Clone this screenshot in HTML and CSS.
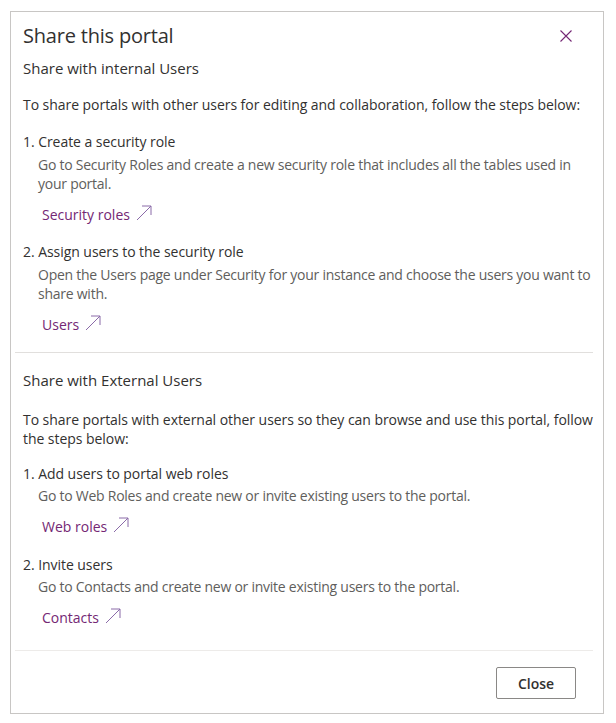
FILE: index.html
```html
<!DOCTYPE html>
<html>
<head>
<meta charset="utf-8">
<link rel="stylesheet" href="styles.css">
</head>
<body>
<div class="dialog">
  <div class="header">
    <h1 class="title">Share this portal</h1>
    <button class="x" aria-label="Close">
      <svg width="12" height="12" viewBox="0 0 12 12"><path d="M0.5 0.5 L11.5 11.5 M11.5 0.5 L0.5 11.5" stroke="#742774" stroke-width="1.1" fill="none"/></svg>
    </button>
  </div>
  <div class="section">
    <h2 class="subtitle">Share with internal Users</h2>
    <p class="intro">To share portals with other users for editing and collaboration, follow the steps below:</p>
    <div class="step">
      <div class="step-title">1. Create a security role</div>
      <div class="step-desc">Go to Security Roles and create a new security role that includes all the tables used in your portal.</div>
      <a class="link">Security roles <svg class="arrow" width="16" height="16" viewBox="0 0 16 16"><path d="M1 15 L15 1 M6 1 H15 V10" stroke="#8a6aa8" stroke-width="1" fill="none"/></svg></a>
    </div>
    <div class="step">
      <div class="step-title">2. Assign users to the security role</div>
      <div class="step-desc">Open the Users page under Security for your instance and choose the users you want to share with.</div>
      <a class="link">Users <svg class="arrow" width="16" height="16" viewBox="0 0 16 16"><path d="M1 15 L15 1 M6 1 H15 V10" stroke="#8a6aa8" stroke-width="1" fill="none"/></svg></a>
    </div>
  </div>
  <div class="section second">
    <h2 class="subtitle">Share with External Users</h2>
    <p class="intro">To share portals with external other users so they can browse and use this portal, follow the steps below:</p>
    <div class="step">
      <div class="step-title">1. Add users to portal web roles</div>
      <div class="step-desc">Go to Web Roles and create new or invite existing users to the portal.</div>
      <a class="link">Web roles <svg class="arrow" width="16" height="16" viewBox="0 0 16 16"><path d="M1 15 L15 1 M6 1 H15 V10" stroke="#8a6aa8" stroke-width="1" fill="none"/></svg></a>
    </div>
    <div class="step">
      <div class="step-title">2. Invite users</div>
      <div class="step-desc">Go to Contacts and create new or invite existing users to the portal.</div>
      <a class="link">Contacts <svg class="arrow" width="16" height="16" viewBox="0 0 16 16"><path d="M1 15 L15 1 M6 1 H15 V10" stroke="#8a6aa8" stroke-width="1" fill="none"/></svg></a>
    </div>
  </div>
  <div class="footer">
    <button class="close-btn">Close</button>
  </div>
</div>
</body>
</html>
```
FILE: styles.css
```css
* { box-sizing: border-box; }
html, body { margin: 0; padding: 0; background: #fff; }
body {
  font-family: "Open Sans", "Noto Sans", sans-serif;
  color: #323130;
  padding: 11px 12px 10px 10px;
}
.dialog {
  border: 1px solid #c8c6c4;
  width: 594px;
  height: 703px;
  display: flex;
  flex-direction: column;
  background: #fff;
}
.header {
  display: flex;
  justify-content: space-between;
  align-items: center;
  padding: 11px 30px 0 12px;
}
.title {
  margin: 0;
  font-size: 20px;
  font-weight: 400;
  line-height: 26px;
  letter-spacing: -0.2px;
}
.x {
  border: none;
  background: none;
  padding: 0;
  width: 14px;
  height: 14px;
  display: flex;
  align-items: center;
  justify-content: center;
}
.section {
  margin: 0 10px 0 4px;
  padding: 0 0 0 8px;
}
.subtitle {
  margin: 9px 0 0 0;
  font-size: 15px;
  font-weight: 400;
  line-height: 20px;
}
.intro {
  margin: 17px 0 0 0;
  font-size: 14px;
  line-height: 19.5px;
  letter-spacing: -0.05px;
}
.step { margin-top: 17px; }
.step-title {
  font-size: 14px;
  line-height: 20px;
  letter-spacing: -0.05px;
}
.step-desc {
  margin: 3px -4px 0 15px;
  font-size: 14px;
  line-height: 19.5px;
  color: #605e5c;
  letter-spacing: -0.25px;
}
.link {
  display: inline-flex;
  align-items: center;
  gap: 6px;
  margin: 11px 0 0 19px;
  font-size: 14px;
  line-height: 20px;
  color: #742774;
}
.arrow { margin-top: -4px; }
.second {
  border-top: 1px solid #e1dfdd;
  margin-top: 17px;
  padding-top: 17px;
}
.second .subtitle { margin-top: 0; }
.second .intro { margin-top: 20px; }
.second .step { margin-top: 15px; }
.second .step + .step { margin-top: 18px; }
.second .step-desc { margin-top: 2.5px; }
.second .link { margin-top: 11px; }
.footer {
  margin: auto 10px 0 4px;
  border-top: 1px solid #edebe9;
  padding: 16px 17px 14px 0;
  display: flex;
  justify-content: flex-end;
}
.close-btn {
  font-family: "Open Sans", "Noto Sans", sans-serif;
  font-size: 14px;
  font-weight: 600;
  color: #323130;
  background: #fff;
  border: 1px solid #8a8886;
  border-radius: 2px;
  width: 80px;
  height: 32px;
  padding: 0;
}
```
